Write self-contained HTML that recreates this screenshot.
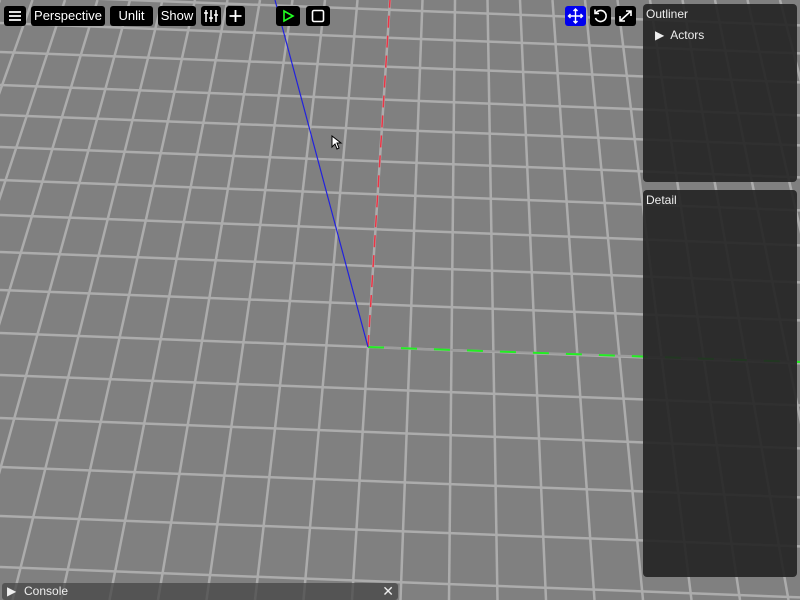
<!DOCTYPE html>
<html style="overflow:hidden"><head><meta charset="utf-8"><style>
html,body{margin:0;width:800px;height:600px;overflow:hidden}
body{background:#808080;font-family:"Liberation Sans",sans-serif;position:relative}
svg#g{position:absolute;left:0;top:0;overflow:hidden}
.b{position:absolute;top:6px;height:20px;background:#000;color:#fff;border-radius:3px;font-size:13px;line-height:20px;text-align:center}
.p{position:absolute;background:rgba(34,34,34,0.9);border-radius:4px;color:#eee;font-size:12px}
</style></head><body>
<svg id="g" width="800" height="600"></svg>
<div class="b" style="left:4px;width:22px"><svg width="22" height="20"><path d="M5 6h12M5 10h12M5 14h12" stroke="#fff" stroke-width="1.8"/></svg></div>
<div class="b" style="left:31px;width:74px">Perspective</div>
<div class="b" style="left:110px;width:43px">Unlit</div>
<div class="b" style="left:158px;width:38px">Show</div>
<div class="b" style="left:201px;width:20px"><svg width="20" height="20"><path d="M5 4v12M10 4v12M15 4v12M3 7h4M8 12h4M13 9h4" stroke="#fff" stroke-width="1.5"/></svg></div>
<div class="b" style="left:226px;width:19px"><svg width="19" height="20"><path d="M9.5 4v12M3.5 10h12" stroke="#fff" stroke-width="1.8"/></svg></div>
<div class="b" style="left:276px;width:24px"><svg width="24" height="20"><path d="M8 5l9 5-9 5z" fill="none" stroke="#2f2" stroke-width="1.6"/></svg></div>
<div class="b" style="left:306px;width:24px"><svg width="24" height="20"><rect x="6.5" y="4.5" width="11" height="11" rx="1.5" fill="none" stroke="#fff" stroke-width="1.6"/></svg></div>
<div class="b" style="left:565px;width:21px;background:#0000ee"><svg width="21" height="20"><path d="M10.5 3v14M3.5 10h14M8.5 5l2-2 2 2M8.5 15l2 2 2-2M5.5 8l-2 2 2 2M15.5 8l2 2-2 2" stroke="#fff" stroke-width="1.4" fill="none"/></svg></div>
<div class="b" style="left:590px;width:21px"><svg width="21" height="20"><path d="M6 7a5.5 5.5 0 1 1-0.5 5" stroke="#fff" stroke-width="1.6" fill="none"/><path d="M5 3.5v4h4" stroke="#fff" stroke-width="1.6" fill="none"/></svg></div>
<div class="b" style="left:615px;width:21px"><svg width="21" height="20"><path d="M5 15l11-10M11 5h5v5M5 10v5h5" stroke="#fff" stroke-width="1.6" fill="none"/></svg></div>
<div class="p" style="left:643px;top:4px;width:154px;height:178px"><div style="position:absolute;left:3px;top:3px">Outliner</div><div style="position:absolute;left:12px;top:24px">&#9654;&nbsp; Actors</div></div>
<div class="p" style="left:643px;top:190px;width:154px;height:387px"><div style="position:absolute;left:3px;top:3px">Detail</div></div>
<div style="position:absolute;left:2px;top:583px;width:396px;height:17px;background:rgba(70,70,70,0.75);border-radius:3px;color:#eee;font-size:12px;line-height:17px;overflow:hidden"><span style="position:absolute;left:5px">&#9654;</span><span style="position:absolute;left:22px">Console</span><span style="position:absolute;right:4px;font-size:14px">&#10005;</span></div>
<svg style="position:absolute;left:331px;top:135px" width="12" height="16"><path d="M1 1v11l3-3 2 5 2-1-2-5h4z" fill="#fff" stroke="#000" stroke-width="1"/></svg>
<script>
var s=document.getElementById('g'),h='';
function L(x1,y1,x2,y2,c,w,d){h+='<line x1="'+x1+'" y1="'+y1+'" x2="'+x2+'" y2="'+y2+'" stroke="'+c+'" stroke-width="'+w+'"'+(d?' stroke-dasharray="'+d+'"':'')+'/>';}
for(var i=-14;i<=14;i++){L(390+32.5*i,0,352+48.5*i,600,'#acacac',2.5);}
var ys=[-18,9,37,66,99,129,161,194,229,266,304,347,389,432,481,530,581,633];
ys.forEach(function(v){L(0,v-0.038*368,800,v+0.038*432,'#acacac',2.5);});
L(368,347,800,362,'#9c9c9c',2);L(368,347,800,362,'#22ee22',2,'16 17');
L(368,347,390,0,'#ee3344',1.5,'12 8');
L(368,347,275,0,'#2222dd',1.2);
s.innerHTML=h;
</script>
</body></html>
